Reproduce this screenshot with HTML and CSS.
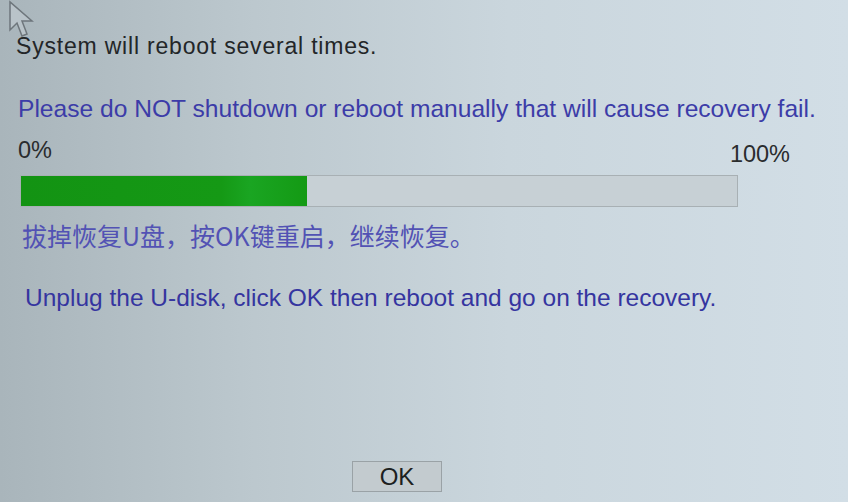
FILE: index.html
```html
<!DOCTYPE html>
<html>
<head>
<meta charset="utf-8">
<link rel="stylesheet" href="styles.css">
</head>
<body>
<div class="screen">
  <svg class="cursor" width="26" height="40" viewBox="0 0 26 40">
    <path d="M2 2 L2 30 L9 23 L14 36 L19 34 L14 21 L24 21 Z" fill="rgba(200,208,214,0.5)" stroke="#6e767c" stroke-width="1.5"/>
  </svg>
  <p class="line system">System will reboot several times.</p>
  <p class="line warn">Please do NOT shutdown or reboot manually that will cause recovery fail.</p>
  <div class="labels">
    <span class="pct start">0%</span>
    <span class="pct end">100%</span>
  </div>
  <div class="bar"><div class="fill" style="width:40%"></div></div>
  <p class="line cn">拔掉恢复U盘，按OK键重启，继续恢复。</p>
  <p class="line unplug">Unplug the U-disk, click OK then reboot and go on the recovery.</p>
  <div class="actions"><button class="ok">OK</button></div>
</div>
</body>
</html>
```
FILE: styles.css
```css
html, body { margin: 0; padding: 0; }
body {
  width: 848px; height: 502px; overflow: hidden;
  font-family: "Liberation Sans", Arial, "Noto Sans CJK SC", sans-serif;
}
.screen {
  position: relative;
  box-sizing: border-box;
  width: 848px; height: 502px;
  padding: 32px 0 0 16px;
  background: linear-gradient(90deg, #a9b5bb 0%, #bcc8ce 30%, #cad6dd 60%, #d2dee6 100%);
  display: flex; flex-direction: column;
}
.cursor { position: absolute; left: 8px; top: 0; }
.line { margin: 0; white-space: nowrap; }
.system { font-size: 23px; letter-spacing: 0.8px; color: #232628; line-height: 28px; }
.warn { font-size: 24.6px; color: #3c3ca8; line-height: 28px; margin-top: 35px; margin-left: 2px; }
.labels { display: flex; align-items: flex-start; width: 772px; justify-content: space-between; margin-top: 14px; margin-left: 2px; }
.pct { font-size: 23.5px; color: #2a2c2e; line-height: 26px; }
.end { margin-top: 4px; }
.bar {
  width: 716px; height: 30px; margin-top: 8px; margin-left: 4px;
  background: #c7d0d5; border: 1px solid #a8b0b4; box-sizing: content-box;
}
.fill { height: 100%; background: linear-gradient(90deg, #139313 0%, #159915 70%, #1aa522 80%, #149a14 100%); }
.cn { font-family: "Noto Sans CJK SC", sans-serif; font-size: 25px; color: #5252b4; line-height: 32px; margin-top: 12px; margin-left: 6px; }
.unplug { font-size: 24.5px; color: #3535a0; line-height: 28px; margin-top: 33px; margin-left: 9px; }
.actions { margin-top: auto; margin-bottom: 10px; padding-left: 336px; }
.ok {
  width: 90px; height: 31px; font-family: "Liberation Sans", Arial, sans-serif;
  font-size: 24px; color: #1d1f21; background: #c3cbcf;
  border: 1px solid #9aa2a6; border-radius: 0; padding: 0; line-height: 29px;
}
```
